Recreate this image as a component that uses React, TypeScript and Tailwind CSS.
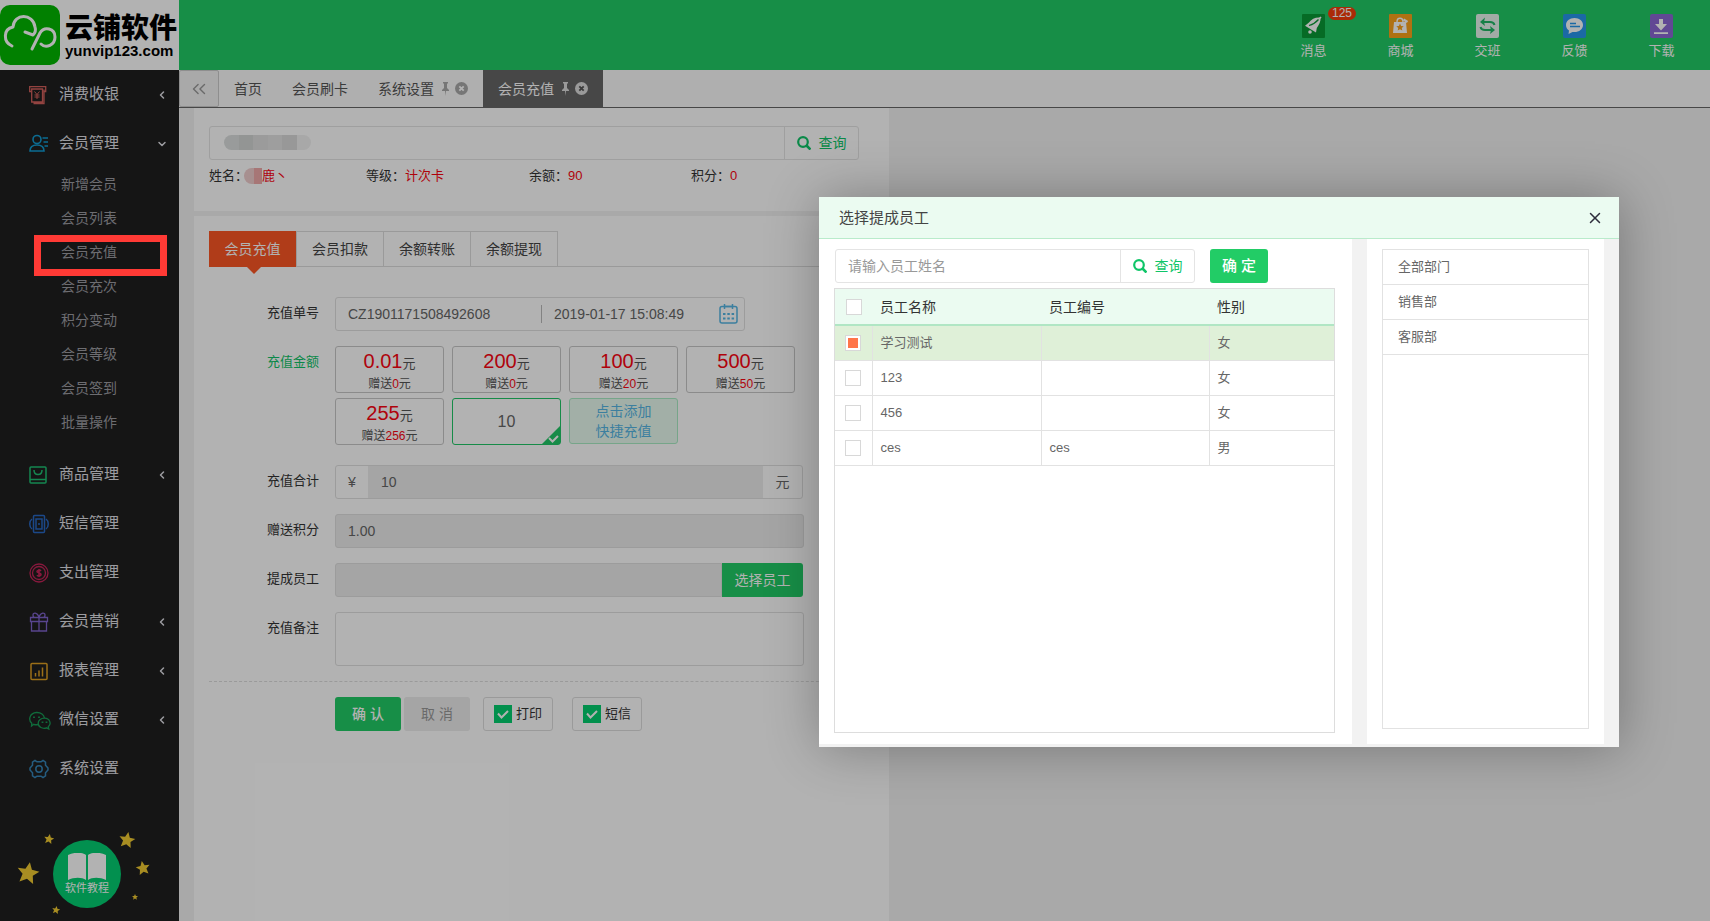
import React, { useState } from "react";
import { ChevronDown, ChevronLeft, ChevronsLeft, X } from "lucide-react";

type MenuItem = { label: string; icon: React.ReactNode; arrow?: boolean; children?: string[] };
type Amount = { value: string; gift: string };
type Staff = { name: string; code: string; gender: string };

const iconProps = { width: 20, height: 20, viewBox: "0 0 20 20", fill: "none", strokeWidth: 1.3 };

const menu: MenuItem[] = [
  {
    label: "消费收银",
    arrow: true,
    icon: (
      <svg {...iconProps} stroke="#d3605c">
        <path d="M2.500 6.500H.7V1.700h16v4.800h-2" />
        <path d="M2.700 4h10.800v13H2.700zM15 4.500v14H4.500" />
        <path strokeWidth="1" d="M5.500 6.500L8 9.500l2.500-3M8 9.500V14M5.500 10h5M5.500 12h5" />
      </svg>
    ),
  },
  {
    label: "会员管理",
    icon: (
      <svg {...iconProps} stroke="#129bd2" strokeWidth={1.6}>
        <circle cx="8" cy="5.500" r="4" />
        <path d="M1 17c0-4 3-6 7-6s7 2 7 6zM13.500 4H19M14.500 8H19M15.500 12H19" />
      </svg>
    ),
    children: ["新增会员", "会员列表", "会员充值", "会员充次", "积分变动", "会员等级", "会员签到", "批量操作"],
  },
  {
    label: "商品管理",
    arrow: true,
    icon: (
      <svg {...iconProps} stroke="#1fc173" strokeWidth={1.5}>
        <rect x="1" y="2" width="16" height="16" rx="1" />
        <path d="M1 14.500h16M5 5c0 6 8 6 8 0" />
      </svg>
    ),
  },
  {
    label: "短信管理",
    icon: (
      <svg {...iconProps} stroke="#2868c4" strokeWidth={1.5}>
        <rect x="4.500" y="1.500" width="11" height="17" rx="1" />
        <rect x="7" y="5" width="6" height="10" />
        <path d="M3 5C0 7 0 13 3 15M17 5c3 2 3 8 0 10M10 9v2" />
      </svg>
    ),
  },
  {
    label: "支出管理",
    icon: (
      <svg {...iconProps} stroke="#c32458">
        <circle cx="10" cy="10" r="9" />
        <circle cx="10" cy="10" r="6.500" />
        <path strokeWidth="1.600" d="M12 8c-1-1.300-4-1-4 .5s4 1.200 4 3-3 2-4 .6M10 6v8" />
      </svg>
    ),
  },
  {
    label: "会员营销",
    arrow: true,
    icon: (
      <svg {...iconProps} stroke="#7f63cc">
        <path d="M1.500 5.500h17v4h-17zM2.500 9.500h15V19h-15zM10 5.500V19M10 5C8 0 4 .5 4 3c0 1.500 1 2.500 2 2.500M10 5c2-5 6-4.500 6-2 0 1.500-1 2.500-2 2.500" />
      </svg>
    ),
  },
  {
    label: "报表管理",
    arrow: true,
    icon: (
      <svg {...iconProps} stroke="#e0a023" strokeWidth={1.5}>
        <rect x="2" y="2.500" width="16" height="16" rx="1" />
        <path d="M6.500 12v3.500M10 9.500v6M13.500 6.500v9" />
      </svg>
    ),
  },
  {
    label: "微信设置",
    arrow: true,
    icon: (
      <svg {...iconProps} width={22} viewBox="0 0 22 20" stroke="#189a55">
        <path d="M9 14.500c-1.500.4-3 .3-4.200-.2L2.500 16l.3-2.700C-1 10 .5 3 7.500 2.500 12 2.300 15 5 15.400 8" />
        <path d="M15.500 8.200c-4 0-6.300 2.500-6.300 5 0 4 4.500 6 8.300 4.600l2.300 1.200-.5-2.200c3.500-3 1.500-8.600-3.800-8.600z" />
        <path strokeWidth="1.800" d="M5 6.500v1.600M10 6.500v1.600M13.500 11.500V13M17.500 11.500V13" />
      </svg>
    ),
  },
  {
    label: "系统设置",
    icon: (
      <svg {...iconProps} stroke="#3585b8" strokeWidth={1.5}>
        <circle cx="10" cy="10" r="3.200" />
        <path d="M6 1.500l2 1.300h4l2-1.300 2.500 1.700v3L19 9v2l-2.500 2.800v3L14 18.500l-2-1.300H8l-2 1.300-2.500-1.700v-3L1 11V9l2.500-2.800v-3z" />
      </svg>
    ),
  },
];

const amounts: Amount[] = [
  { value: "0.01", gift: "0" },
  { value: "200", gift: "0" },
  { value: "100", gift: "20" },
  { value: "500", gift: "50" },
  { value: "255", gift: "256" },
];

const staff: Staff[] = [
  { name: "学习测试", code: "", gender: "女" },
  { name: "123", code: "", gender: "女" },
  { name: "456", code: "", gender: "女" },
  { name: "ces", code: "ces", gender: "男" },
];

const departments = ["全部部门", "销售部", "客服部"];

const shortcuts = [
  {
    label: "消息",
    badge: "125",
    icon: (
      <svg width="23" height="24" viewBox="0 0 23 24">
        <rect width="23" height="24" rx="1" fill="#0a9a35" />
        <path fill="#fff" d="M18.500 3.500c-5-.5-9 1.500-11.500 5l-4 3.200 11 6.800.8-4.500c2.200-3.500 4.200-6.500 3.700-10.500z" />
        <path stroke="#fff" strokeWidth="1.600" d="M17.500 4.500l1.500-1.500" />
        <circle cx="8" cy="18" r="1.800" fill="#fff" />
        <path stroke="#0a9a35" strokeWidth="1.200" fill="none" d="M16.500 5.500c-3 3.500-6 5-9.500 6" />
      </svg>
    ),
  },
  {
    label: "商城",
    icon: (
      <svg width="23" height="24" viewBox="0 0 23 24">
        <rect width="23" height="24" rx="1" fill="#fba31b" />
        <path fill="#fff" d="M5 8h12l1 11H4z" />
        <path stroke="#fff" strokeWidth="1.400" fill="none" d="M8 8c0-5 6-5 6 0" />
        <path stroke="#fff" strokeWidth="2.400" fill="none" d="M14.500 5.500l4 2.500" />
        <path fill="#fba31b" d="M11 9.500l1.100 2.400 2.600.3-1.900 1.800.5 2.600-2.300-1.300-2.300 1.300.5-2.600-1.900-1.800 2.600-.3z" />
      </svg>
    ),
  },
  {
    label: "交班",
    icon: (
      <svg width="23" height="24" viewBox="0 0 23 24">
        <rect width="23" height="24" rx="2" fill="#e8f5ee" />
        <path fill="none" stroke="#22b866" strokeWidth="2" d="M6 8h8c3 0 4 1 4.500 3M17 16H9c-3 0-4-1-4.500-3" />
        <path fill="#22b866" d="M9 3.500l-1 4.500 1 4L4 8zM14 12l1 4-1 4 5-4z" />
      </svg>
    ),
  },
  {
    label: "反馈",
    icon: (
      <svg width="23" height="24" viewBox="0 0 23 24">
        <rect width="23" height="24" rx="2" fill="#2797ec" />
        <path fill="#fff" d="M11.500 4C6.500 4 3 7 3 11c0 2.500 1.200 4.300 3 5.500L5.500 20l4-2c6 .8 10.500-2.500 10.500-7 0-4-3.500-7-8.500-7z" />
        <path stroke="#2797ec" strokeWidth="1.400" d="M7 9.500h6M7 12.500h10" />
      </svg>
    ),
  },
  {
    label: "下载",
    icon: (
      <svg width="23" height="24" viewBox="0 0 23 24">
        <rect width="23" height="24" rx="2" fill="#8b68d4" />
        <path fill="#fff" d="M9 5h4v5h4l-6 6.500L5 10h4zM4 18.300h14V20H4z" />
      </svg>
    ),
  },
];

const stars = [
  { x: 28, y: 38, r: 11, a: 10 },
  { x: 49, y: 4, r: 5, a: 10 },
  { x: 127, y: 5, r: 8, a: 10 },
  { x: 143, y: 33, r: 7, a: -10 },
  { x: 135, y: 62, r: 3, a: 0 },
  { x: 56, y: 75, r: 4, a: 10 },
];

function Logo() {
  return (
    <div className="flex h-[70px] w-[179px] shrink-0 items-center gap-[5px] overflow-hidden bg-white">
      <svg className="shrink-0" width="60" height="62" viewBox="0 0 60 62">
        <rect y="1" width="60" height="60" rx="10" fill="#02b801" />
        <g fill="none" stroke="#fff" strokeWidth="3" strokeLinecap="round" strokeLinejoin="round">
          <path d="M12 42C3 38 3 25 13 23c1-14 20-14 22 0 1 3 0 6-2 8l-8-3" />
          <path d="M32 45l8-16c4-7 15-5 15 4 0 8-9 12-14 7" />
        </g>
      </svg>
      <div className="shrink-0 whitespace-nowrap text-black">
        <div className="font-['Noto_Sans_CJK_SC'] text-[28px] leading-[32px] font-black">云铺软件</div>
        <div className="text-[15px] leading-[18px] font-bold">yunvip123.com</div>
      </div>
    </div>
  );
}

function Sidebar() {
  return (
    <aside className="flex w-[179px] shrink-0 flex-col justify-between bg-[#1f1f1f] text-[#e0e0e6]">
      <nav>
        {menu.map((item) => (
          <div key={item.label}>
            <button className="flex h-[49px] w-full items-center pr-[11px] pl-[29px] text-[15px]">
              <span className="w-[30px]">{item.icon}</span>
              {item.label}
              {item.arrow && <ChevronLeft size={12} strokeWidth={3} className="ml-auto" />}
              {item.children && <ChevronDown size={12} strokeWidth={3} className="ml-auto" />}
            </button>
            {item.children && (
              <ul className="pb-[10px]">
                {item.children.map((c) => (
                  <li key={c} className="relative h-[34px]">
                    <a href="#" className="block pl-[61px] text-sm leading-[33px] text-[#9c9ca2]">{c}</a>
                    {c === "会员充值" && (
                      <span className="absolute -top-[1px] right-3 left-[34px] z-30 h-[41px] border-[7px] border-[#ff3a35]" />
                    )}
                  </li>
                ))}
              </ul>
            )}
          </div>
        ))}
      </nav>
      <a href="#" aria-label="软件教程" className="relative mb-[13px] ml-[53px] flex size-[68px] flex-col items-center justify-center rounded-full bg-[#03cf72] text-white">
        <svg width="38" height="27" viewBox="0 0 38 27" fill="#fff">
          <path d="M0 2c6-3 14-3 18 0v25c-4-3-12-3-18 0zM20 2c4-3 12-3 18 0v25c-6-3-14-3-18 0z" />
        </svg>
        <span className="text-[11px] leading-4">软件教程</span>
        <svg className="absolute -top-[13px] -left-[53px] overflow-visible" width="160" height="90" viewBox="0 -8 160 90">
          {stars.map((s) => (
            <path
              key={s.x}
              fill="#f1cb31"
              transform={`translate(${s.x} ${s.y}) rotate(${s.a}) scale(${s.r / 10})`}
              d="M0-10l3 6.500 7 .5-5.300 4.600L6.300 9 0 5.300-6.300 9l1.600-7.400L-10-3l7-.5z"
            />
          ))}
        </svg>
      </a>
    </aside>
  );
}

function PageTab({ label, active, closable }: { label: string; active?: boolean; closable?: boolean }) {
  return (
    <button className={`flex h-[37px] items-center px-[15px] text-sm ${active ? "bg-[#666] text-white" : "text-[#555]"}`}>
      {label}
      {closable && (
        <span className={`flex items-center gap-[5px] pl-[7px] ${active ? "text-[#ddd]" : "text-[#aaa]"}`}>
          <svg width="9" height="15" viewBox="0 0 9 15" fill="currentColor">
            <path d="M2 1h5v1L6 3v4l2 2v1H5l-.5 5L4 10H1V9l2-2V3L2 2z" />
          </svg>
          <svg width="13" height="13" viewBox="0 0 13 13">
            <circle cx="6.500" cy="6.500" r="6.500" fill="currentColor" />
            <path d="M4.300 4.300l4.400 4.400M8.700 4.300L4.300 8.700" stroke={active ? "#555" : "#fff"} strokeWidth="1.800" />
          </svg>
        </span>
      )}
    </button>
  );
}

function SearchBox({ placeholder, label }: { placeholder?: string; label: string }) {
  return (
    <div className="flex h-[34px] flex-1 rounded-[3px] border border-[#e4e4e4] bg-white">
      <input aria-label={label} placeholder={placeholder} className="min-w-0 flex-1 px-3 text-sm outline-none placeholder:text-[#999]" />
      <button className="flex w-[74px] items-center justify-center gap-2 border-l border-[#e4e4e4] text-sm text-[#0fc568]">
        <svg width="14" height="14" viewBox="0 0 14 14" fill="none" stroke="currentColor" strokeWidth="2.200">
          <circle cx="6" cy="6" r="4.800" />
          <path d="M9.500 9.500l4 4" strokeWidth="2.600" />
        </svg>
        查询
      </button>
    </div>
  );
}

function Field({ label, id, children }: { label: string; id: string; children: React.ReactNode }) {
  return (
    <div className="mb-[15px] flex">
      <label htmlFor={id} className="w-[111px] pr-px text-right text-[13px] leading-[31px] text-[#333]">{label}</label>
      <div className="ml-[15px] w-[469px]">{children}</div>
    </div>
  );
}

function CheckOption({ label }: { label: string }) {
  const [on, setOn] = useState(true);
  return (
    <label className="relative flex h-[34px] w-[70px] items-center gap-1 rounded-[3px] border border-[#ddd] pl-[10px] text-[13px] text-[#333]">
      <input type="checkbox" checked={on} onChange={(e) => setOn(e.target.checked)} className="size-[18px] appearance-none border border-[#03cf6f] checked:bg-[#03cf6f]" />
      {on && (
        <svg className="pointer-events-none absolute left-[13px]" width="12" height="12" viewBox="0 0 12 12" fill="none" stroke="#fff" strokeWidth="2">
          <path d="M1 5.500l3.500 4L11 3" />
        </svg>
      )}
      {label}
    </label>
  );
}

function RechargeForm() {
  return (
    <section className="flex-1 bg-white px-[15px] pt-[15px]">
      <div className="flex border-b border-[#ddd] text-sm text-[#444]">
        <button className="relative -mb-px h-9 w-[87px] bg-[#fd5624] text-white">
          会员充值
          <span className="absolute top-9 left-[38px] border-x-[7px] border-t-[7px] border-x-transparent border-t-[#fd5624]" />
        </button>
        <div className="flex border-l border-[#ddd]">
          {["会员扣款", "余额转账", "余额提现"].map((t) => (
            <button key={t} className="h-[35px] w-[87px] border-t border-r border-[#ddd]">{t}</button>
          ))}
        </div>
      </div>

      <form className="pt-[30px]" onSubmit={(e) => e.preventDefault()}>
        <Field label="充值单号" id="order">
          <div className="flex h-[34px] w-[410px] items-center rounded-[3px] border border-[#e0e0e0] text-sm text-[#666]">
            <input id="order" readOnly value="CZ1901171508492608" className="w-[205px] px-3 outline-none" />
            <span className="h-[18px] w-px bg-[#bbb]" />
            <input aria-label="充值时间" readOnly value="2019-01-17 15:08:49" className="min-w-0 flex-1 pl-3 outline-none" />
            <svg className="mr-[6px]" width="19" height="20" viewBox="0 0 19 20" fill="none" stroke="#57b7e4" strokeWidth="1.500">
              <rect x="1" y="2.500" width="17" height="16.500" rx="2" />
              <path d="M5.500 0v5M13.500 0v5M5.500 2.500h8" />
              <path strokeWidth="2" d="M4 10h2.500M8.300 10h2.500M12.600 10h2.500M4 14.500h2.500M8.300 14.500h2.500M12.600 14.500h2.500" />
            </svg>
          </div>
        </Field>

        <div className="mb-5 flex">
          <span className="w-[111px] pr-px text-right text-[13px] leading-[31px] text-[#10c469]">充值金额</span>
          <div className="ml-[15px] grid w-[460px] grid-cols-4 gap-x-2 gap-y-[5px]">
            {amounts.map((a) => (
              <button key={a.value} type="button" className="h-[47px] rounded-[3px] border border-[#c8c8c8] text-xs text-[#555]">
                <span className="block text-[13px] leading-[26px]">
                  <b className="text-xl leading-[26px] font-normal text-[#fb0512]">{a.value}</b>元
                </span>
                <span className="block leading-[14px]">
                  赠送<b className="font-normal text-[#fb0512]">{a.gift}</b>元
                </span>
              </button>
            ))}
            <div className="relative h-[47px] rounded-[3px] border border-[#22c767]">
              <input aria-label="充值金额" defaultValue="10" className="size-full text-center text-base text-[#666] outline-none" />
              <svg className="absolute right-0 bottom-0" width="18" height="18" viewBox="0 0 18 18">
                <path d="M18 0v18H0z" fill="#22c767" />
                <path d="M7 12l3.500 3.500L16 10" fill="none" stroke="#fff" strokeWidth="2" />
              </svg>
            </div>
            <button type="button" className="h-[46px] rounded-[3px] border border-[#a9ecc4] bg-[#e8fbf0] text-sm leading-5 text-[#57b7e4]">
              点击添加<br />快捷充值
            </button>
          </div>
        </div>

        <Field label="充值合计" id="total">
          <div className="mr-px flex h-[34px] rounded-[3px] border border-[#e0e0e0] text-sm text-[#666]">
            <span className="w-8 text-center leading-8">¥</span>
            <input id="total" readOnly value="10" className="min-w-0 flex-1 bg-[#ececec] px-[13px] outline-none" />
            <span className="w-[39px] text-center leading-8">元</span>
          </div>
        </Field>
        <Field label="赠送积分" id="points">
          <input id="points" readOnly value="1.00" className="block h-[34px] w-full rounded-[3px] border border-[#e0e0e0] bg-[#ececec] px-3 text-sm text-[#666] outline-none" />
        </Field>
        <Field label="提成员工" id="staff">
          <div className="mr-px flex h-[34px]">
            <input id="staff" readOnly className="min-w-0 flex-1 rounded-l-[3px] border border-[#e0e0e0] bg-[#ececec] outline-none" />
            <button type="button" className="w-[81px] rounded-r-[3px] bg-[#22cc66] text-sm text-white">选择员工</button>
          </div>
        </Field>
        <Field label="充值备注" id="remark">
          <textarea id="remark" className="block h-[54px] w-full resize-none rounded-[3px] border border-[#e0e0e0] outline-none" />
        </Field>

        <div className="flex border-t border-dashed border-[#ddd] pt-[15px] pl-[126px]">
          <button className="h-[34px] w-[66px] rounded-[3px] bg-[#22cc66] text-sm font-medium text-white">确 认</button>
          <button type="button" className="ml-[3px] h-[34px] w-[66px] rounded-[3px] bg-[#ececec] text-sm text-[#999]">取 消</button>
          <div className="ml-[13px] flex gap-[19px]">
            <CheckOption label="打印" />
            <CheckOption label="短信" />
          </div>
        </div>
      </form>
    </section>
  );
}

function Box({ label, checked, onChange }: { label: string; checked?: boolean; onChange: () => void }) {
  return (
    <input
      type="checkbox"
      aria-label={label}
      checked={!!checked}
      onChange={onChange}
      className="mx-auto block size-4 appearance-none border border-[#d8d8d8] bg-white shadow-[inset_0_0_0_2px_#fff] checked:bg-[#ff7549]"
    />
  );
}

function StaffDialog() {
  const [picked, setPicked] = useState<number[]>([0]);
  const toggle = (i: number) => setPicked(picked.includes(i) ? picked.filter((p) => p !== i) : [...picked, i]);
  const all = picked.length === staff.length;

  return (
    <div role="dialog" aria-label="选择提成员工" className="absolute top-[197px] left-[819px] z-20 flex h-[550px] w-[800px] flex-col bg-[#f2f2f2] shadow-[1px_1px_50px_rgba(0,0,0,0.3)]">
      <header className="flex h-[42px] shrink-0 items-center justify-between border-b border-[#b9ebcb] bg-[#ebfbf1] pt-px pr-[15px] pl-5 text-[15px] text-[#444]">
        选择提成员工
        <button aria-label="关闭" className="text-[#2e2d3c]">
          <X size={18} strokeWidth={2} />
        </button>
      </header>
      <div className="flex min-h-0 flex-1 gap-[15px] pr-[15px] pb-[3px]">
        <div className="flex flex-1 flex-col bg-white pt-[10px] pr-[17px] pb-[11px] pl-[15px]">
          <div className="flex gap-[15px] pr-[67px] pl-px">
            <SearchBox label="员工姓名" placeholder="请输入员工姓名" />
            <button className="h-[34px] w-[58px] rounded-[3px] bg-[#22cc66] text-[15px] font-medium text-white">确 定</button>
          </div>
          <div className="mt-[5px] flex-1 border border-[#ddd]">
            <table className="w-full table-fixed border-collapse text-left text-[13px] text-[#666]">
              <thead>
                <tr className="h-9 border-b-2 border-[#b0e6c4] bg-[#ebfbf1] text-sm text-[#333]">
                  <th className="w-[37px]">
                    <Box label="全选" checked={all} onChange={() => setPicked(all ? [] : staff.map((_, i) => i))} />
                  </th>
                  <th className="w-[169px] pl-2 font-normal">员工名称</th>
                  <th className="w-[168px] pl-2 font-normal">员工编号</th>
                  <th className="pl-2 font-normal">性别</th>
                </tr>
              </thead>
              <tbody>
                {staff.map((s, i) => (
                  <tr key={s.name} className={`h-[35px] border-b border-[#e2e2e2] ${picked.includes(i) ? "bg-[#dff0d8]" : ""}`}>
                    <td className="border-r border-[#e2e2e2]">
                      <Box label={s.name} checked={picked.includes(i)} onChange={() => toggle(i)} />
                    </td>
                    <td className="border-r border-[#e2e2e2] pl-2">{s.name}</td>
                    <td className="border-r border-[#e2e2e2] pl-2">{s.code}</td>
                    <td className="pl-2">{s.gender}</td>
                  </tr>
                ))}
              </tbody>
            </table>
          </div>
        </div>
        <div className="flex w-[237px] flex-col bg-white px-[15px] pt-[10px] pb-[15px]">
          <ul className="flex-1 border border-[#e2e2e2] text-[13px] text-[#666]">
            {departments.map((d) => (
              <li key={d} className="h-[35px] border-b border-[#e2e2e2] pl-[15px] leading-[33px]">{d}</li>
            ))}
          </ul>
        </div>
      </div>
    </div>
  );
}

export default function App() {
  return (
    <div className="relative flex min-h-screen flex-col overflow-hidden bg-[#f2f2f2] font-['Liberation_Sans','Noto_Sans_CJK_SC',sans-serif]">
      <header className="flex h-[70px] shrink-0 bg-[#22cc66]">
        <Logo />
        <div className="ml-auto flex pr-[5px]">
          {shortcuts.map((s) => (
            <button key={s.label} className="relative flex w-[87px] flex-col items-center pt-[14px] text-[13px] text-white">
              {s.icon}
              <span className="mt-1 leading-[18px]">{s.label}</span>
              {s.badge && (
                <span className="absolute top-[7px] left-[58px] rounded-full bg-[#f53d0b] px-1 text-xs leading-[13px]">{s.badge}</span>
              )}
            </button>
          ))}
        </div>
      </header>

      <div className="flex flex-1">
        <Sidebar />
        <main className="flex min-w-0 flex-1 flex-col">
          <div className="flex border-b border-[#666] bg-[#fbfbfb]">
            <button aria-label="收起" className="flex w-10 items-center justify-center rounded-[2px] border border-[#ccc] bg-[#f2f2f2] text-[#999]">
              <ChevronsLeft size={22} strokeWidth={1.5} />
            </button>
            <PageTab label="首页" />
            <PageTab label="会员刷卡" />
            <PageTab label="系统设置" closable />
            <PageTab label="会员充值" active closable />
          </div>
          <div className="ml-[15px] flex w-[695px] flex-1 flex-col gap-[5px]">
            <section className="h-[103px] bg-white px-[15px] pt-[18px]">
              <div className="relative flex w-[650px]">
                <SearchBox label="会员查询" />
                <span className="absolute top-[9px] left-[15px] flex h-[15px] w-[87px] overflow-hidden rounded-full">
                  <i className="flex-1 bg-[#dbdfde]" />
                  <i className="flex-1 bg-[#d3d6d5]" />
                  <i className="flex-1 bg-[#dedede]" />
                  <i className="flex-1 bg-[#e2e2e2]" />
                  <i className="flex-1 bg-[#dadada]" />
                  <i className="flex-1 bg-[#f1f1f1]" />
                </span>
              </div>
              <dl className="mt-[5px] flex text-[13px] leading-[21px] text-[#333]">
                <div className="flex w-[157px]">
                  <dt>姓名：</dt>
                  <dd className="flex items-center text-[#fb0512]">
                    <span className="-ml-1 flex h-4 w-[18px] overflow-hidden rounded-l-full">
                      <i className="flex-1 bg-[#f0cdcd]" />
                      <i className="w-2 bg-[#efa9a9]" />
                    </span>
                    鹿丶
                  </dd>
                </div>
                <div className="flex w-[163px]">
                  <dt>等级：</dt>
                  <dd className="text-[#fb0512]">计次卡</dd>
                </div>
                <div className="flex w-[162px]">
                  <dt>余额：</dt>
                  <dd className="text-[#fb0512]">90</dd>
                </div>
                <div className="flex">
                  <dt>积分：</dt>
                  <dd className="text-[#fb0512]">0</dd>
                </div>
              </dl>
            </section>
            <RechargeForm />
          </div>
        </main>
      </div>

      <div className="absolute inset-0 z-10 bg-black/30" />
      <StaffDialog />
    </div>
  );
}
